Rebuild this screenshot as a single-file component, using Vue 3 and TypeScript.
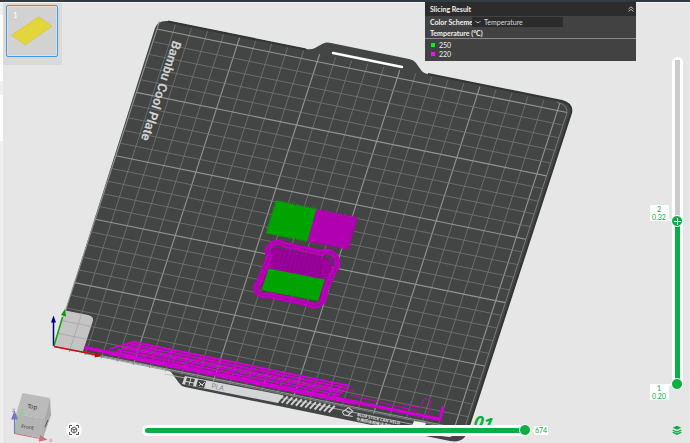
<script setup lang="ts">
import { computed, ref } from 'vue'

interface Line {
  x1: number
  y1: number
  x2: number
  y2: number
  major: boolean
}

const BED = 256
const steps = Array.from({ length: 26 }, (_, i) => i * 10)

const gridLines: Line[] = [
  ...steps.map((v) => ({ x1: v, y1: v === 0 ? 0 : -2, x2: v, y2: BED, major: v % 50 === 0 })),
  ...steps.map((v) => ({ x1: 0, y1: v, x2: BED, y2: v, major: v % 50 === 0 })),
]

const wipeLines = Array.from({ length: 7 }, (_, i) => ({
  x1: 46 - i * 2,
  y1: 15 - i * 2.1,
  x2: 181 - i + (i > 4 ? 12 : 0),
  y2: 15 - i * 2.1,
}))
const wipeTies = Array.from({ length: 23 }, (_, i) => 46 + i * 5.9)
const stripes = Array.from({ length: 12 }, (_, i) => i * 4.7)

const scheme = ref('Temperature')
const schemes = ['Temperature', 'Line Type', 'Speed', 'Layer Height']
const legend = [
  { label: '250', tone: 'hot' },
  { label: '220', tone: 'cool' },
]

const collapsed = ref(false)
const upper = ref(509)
const lower = ref(0)
const move = ref(674)

const offsetOf = (v: number) => `calc(6px + (100% - 12px) * ${v / 1000})`
const upperAt = computed(() => offsetOf(upper.value))
const lowerAt = computed(() => offsetOf(lower.value))
const fillSize = computed(() => `calc((100% - 12px) * ${(upper.value - lower.value) / 1000})`)
const moveSize = computed(() => `calc((100% - 12px) * ${move.value / 674})`)
</script>

<template>
  <main class="viewer">
    <svg class="scene" viewBox="0 0 690 443" preserveAspectRatio="xMinYMin slice" role="img" aria-label="Build plate preview">
      <!-- plate body -->
      <path
        class="plate"
        d="M54 347 L155 28 Q158 20 168 21 L306 49 Q311 50 315 48 L323 43.500 Q327 42 331 43 L409 59 Q414 60 416 63 L421 70 Q423 73 428 74 L562 101 Q573 104 571 113 L466 435 Q462 443 450 441 L185 387 Q181 386 179 383 L171 372 Q169 370 165 369 Z"
      />
      <path class="rim" d="M168 21.500 L306 49.500 M428 74 L562 101 Q573 104 571 113 L466 435" />
      <line class="slot" x1="333" y1="53" x2="402" y2="67" />

      <!-- bed surface, in millimetres -->
      <g transform="matrix(1.602 .326 .412 -1.268 54 346)">
        <line
          v-for="(l, i) in gridLines"
          :key="i"
          :x1="l.x1"
          :y1="l.y1"
          :x2="l.x2"
          :y2="l.y2"
          :class="l.major ? 'major' : 'minor'"
        />
        <path class="corner" d="M0 0 V28 H14 Q18 28 18 24 V0 Z" />
        <path class="corner-grid" d="M10 0 V28 M0 10 H18 M0 20 H18" />
        <path class="rim-light" d="M19 -1 H256 V248 Q256 256 248 256" />
        <path class="edge-light" d="M70 -4 H250" />
      </g>

      <text class="plate-name" transform="translate(173 40) rotate(108)">Bambu Cool Plate</text>

      <!-- lower flange markings -->
      <path class="flange" d="M185 376 L282 395 L278 403 L182 384 Z" />
      <path
        v-for="s in stripes"
        :key="s"
        class="stripe"
        :d="`M${277 + s} ${402 + s * 0.2} L${283 + s} ${395.5 + s * 0.2}`"
      />
      <g class="flange-ink">
        <path d="M187 377.500 l8 1.600 l-2 7 l-8 -1.600 Z M198 379.500 l8 1.600 l-2 7 l-8 -1.600 Z" />
        <path class="ink-cut" d="M191 378 l-2 7 M186 381.500 l8 1.600 M199 382 l3 3 l3 -3 M199 386 l2 -2 l2 2" />
      </g>
      <text class="flange-pla" transform="translate(211 388) rotate(11.5)">PLA</text>
      <g class="eraser" transform="translate(347.500 412) rotate(11)">
        <path d="M-5 1 L0 -4.500 L5 -2 L1 3.500 L-3 3.500 Z M-2.500 -1.500 L2.500 1 M-3 3.500 H6" />
      </g>
      <text class="flange-note" transform="translate(357 416) rotate(11.5)">BLUE STICK CAN HELD</text>
      <text class="flange-note cjk" transform="translate(356 420.500) rotate(11.5)">专用固体胶棒请涂抹均匀</text>
      <path class="tag" d="M414 421 L426 423 L425 426 L412 426 Z M423 434 L450 434 L452 436 L450 437 Z" />
      <text class="plate-number" transform="translate(473 427) rotate(11.5)">01</text>

      <!-- purge line and wipe moves -->
      <g transform="matrix(1.602 .326 .412 -1.268 54 346)">
        <line v-for="(w, i) in wipeLines" :key="i" class="wipe" v-bind="w" />
        <path v-for="x in wipeTies" :key="x" class="tie" :d="`M${x} 15 L${x - 4} 1`" />
        <path class="wipe" d="M33 6 L47 16" />
      </g>
      <path class="purge" d="M84.500 347.500 L441 419.500" />
      <path class="purge side" d="M440 420 L443 406.500" />
      <path class="travel" d="M348 390 L354 391 M350 395 L417 411 M403 409 L404 404.500 L420.500 408 L424 398.500 L431 400 L428 414" />

      <!-- printed parts -->
      <path class="hot-part" d="M276.500 201 L316.500 209.500 L307.500 241 L266.500 233 Z" />
      <path class="cool-part" d="M316.500 209.500 L357 218 L348 249 L307.500 241 Z" />
      <path class="teeth hot-teeth" d="M316.500 209 L276 200.500 L266 233 L307.500 241.500" />
      <path class="teeth cool-teeth" d="M316.500 209 L357.500 217.500 L348.500 249.500 L307.500 241.500" />

      <path class="infill" d="M273 247 L334 259 L323 302 L260 289 Z" />
      <path class="infill-lines" d="M281 245 l-6 22 M285 246 l-6 22 M289 247 l-6 22 M293 248 l-6 22 M297 249 l-6 22 M301 250 l-6 22 M305 250 l-6 23 M309 251 l-6 23 M313 252 l-6 23 M317 253 l-6 23 M321 254 l-6 23 M325 255 l-6 23" />
      <path
        class="brim"
        d="M269 257 C264 245 276 239 285 245 L321 253 C333 247 342 262 335 269 L325 291 C326 304 315 309 306 303 L268 295 C259 298 252 289 259 282 L269 257 Z"
      />
      <path class="brim-lines" d="M269 257 C264 245 276 239 285 245 L321 253 C333 247 342 262 335 269 L325 291 C326 304 315 309 306 303 L268 295 C259 298 252 289 259 282 L269 257 Z" />
      <path class="nook" d="M273 248 Q276 245 282 248 M325 256 Q331 256 331 263 M262 289 L264 283 M315 303 L320 299" />
      <path class="hot-part" d="M268.500 268.500 L325 279.500 L318 301 L261.500 290 Z" />

      <!-- bed axes -->
      <g class="axes">
        <path class="z" d="M53.500 346 V322" />
        <path class="z head" d="M53.500 315.500 l2.500 7 h-5 Z" />
        <path class="y" d="M54 346 L62.500 317" />
        <path class="y head" d="M65 309 l1 7.500 l-5 -1.500 Z" />
        <path class="x" d="M54 346.500 L95 354.500" />
        <path class="x head" d="M102 356 l-7.500 1.500 l1 -5 Z" />
      </g>

      <!-- orientation cube -->
      <g class="cube">
        <path class="cube-side" d="M50 398 L51 415 L43 438 L42 417 Z" />
        <path class="cube-top" d="M22.500 393 L50 398 L45 419 L16 414 Z" />
        <path class="cube-front" d="M16 414 L45 419 L43 438 L14.500 433.500 Z" />
        <path class="cube-rule" d="M45 427 l3 -7" />
        <text class="cube-label" transform="translate(27 408) rotate(8)">Top</text>
        <text class="cube-label small" transform="translate(21 428) rotate(8)">Front</text>
        <path class="gizmo-y" d="M14.500 433.500 L21 413" />
        <path class="gizmo-y fill" d="M22.500 408 l1 7 l-4.500 -1.500 Z" />
        <path class="gizmo-z" d="M14.500 433.500 V418" />
        <path class="gizmo-z fill" d="M14.500 412 l2.500 7 h-5 Z" />
        <path class="gizmo-x" d="M14.500 433.500 L40 438.500" />
        <path class="gizmo-x fill" d="M46 439.500 l-6.500 1.500 l1 -5 Z" />
        <text class="axis-name z-name" x="12" y="412">z</text>
        <text class="axis-name x-name" x="49" y="442">x</text>
      </g>
    </svg>

    <div class="hud">
      <div class="topbar"></div>
      <div class="main">
        <aside class="edge">
          <span class="edge-tab"></span>
          <span class="edge-tab"></span>
        </aside>

        <div class="stage">
          <div class="stage-top">
            <div class="plates">
              <button class="plate-thumb" type="button" aria-label="Plate 1">
                <svg viewBox="0 0 46 47" aria-hidden="true">
                  <path d="M4 27 L29 10 L41.500 18.500 L17 36 Z" />
                </svg>
                <span>1</span>
              </button>
            </div>

            <section class="panel">
              <header>
                <h2>Slicing Result</h2>
                <button type="button" aria-label="Collapse" @click="collapsed = !collapsed">
                  <svg viewBox="0 0 6 6" aria-hidden="true"><path d="M.5 3 L3 .8 L5.500 3 M.5 5.500 L3 3.300 L5.500 5.500" /></svg>
                </button>
              </header>
              <div v-if="!collapsed" class="panel-body">
                <div class="field">
                  <label for="scheme">Color Scheme</label>
                  <span class="select">
                    <svg viewBox="0 0 6 4" aria-hidden="true"><path d="M.5 1 L2 2.500 H4 L5.500 1" /></svg>
                    <select id="scheme" v-model="scheme">
                      <option v-for="s in schemes" :key="s">{{ s }}</option>
                    </select>
                  </span>
                </div>
                <h3>Temperature (°C)</h3>
                <ul>
                  <li v-for="row in legend" :key="row.label"><i :class="row.tone"></i>{{ row.label }}</li>
                </ul>
              </div>
            </section>
          </div>

          <div class="stage-bottom">
            <button class="fit" type="button" aria-label="Fit view">
              <svg viewBox="0 0 16 16" aria-hidden="true">
                <path d="M3.500 6 V3.500 H6 M10 3.500 H12.500 V6 M12.500 10 V12.500 H10 M6 12.500 H3.500 V10" />
                <path d="M8 5 L10.600 6.500 V9.500 L8 11 L5.400 9.500 V6.500 Z M5.400 6.500 L8 8 L10.600 6.500 M8 8 V11" />
              </svg>
            </button>
            <div class="hslider">
              <span class="fill" :style="{ width: moveSize }"></span>
              <input v-model.number="move" type="range" min="0" max="674" aria-label="Move" />
            </div>
            <output class="tip">{{ move }}</output>
          </div>
        </div>

        <aside class="rail">
          <div class="vslider">
            <span class="fill" :style="{ height: fillSize, bottom: lowerAt }"></span>
            <input v-model.number="lower" type="range" min="0" max="1000" aria-label="Lower layer" />
            <input v-model.number="upper" type="range" min="0" max="1000" aria-label="Upper layer" />
            <span class="plus" :style="{ bottom: upperAt }"></span>
            <output class="layer above" :style="{ bottom: upperAt }"><span>2</span><span>0.32</span></output>
            <output class="layer below" :style="{ bottom: lowerAt }"><span>1</span><span>0.20</span></output>
          </div>
          <button class="layers" type="button" aria-label="Layers">
            <svg viewBox="0 0 10 10" aria-hidden="true">
              <path class="solid" d="M5 .8 L9.300 2.800 L5 4.800 L.7 2.800 Z" />
              <path d="M.7 5 L5 7 L9.300 5 M.7 7.200 L5 9.200 L9.300 7.200" />
            </svg>
          </button>
        </aside>
      </div>
    </div>
  </main>
</template>

<style>
body {
  margin: 0;
  overflow: hidden;
}
</style>

<style scoped>
.viewer {
  position: relative;
  height: 100vh;
  background: #e6e6e6;
  font-family: Lato, "Noto Sans CJK SC", sans-serif;
  overflow: hidden;
}
.scene {
  position: absolute;
  inset: 0;
  width: 100%;
  height: 100%;
}
.plate { fill: #434544; }
.rim { fill: none; stroke: #333534; stroke-width: 2; }
.slot { stroke: #fff; stroke-width: 2.5; stroke-linecap: round; }
.minor, .major, .rim-light, .edge-light, .corner-grid { fill: none; vector-effect: non-scaling-stroke; }
.minor { stroke: #747675; stroke-width: 0.8; }
.major { stroke: #939594; stroke-width: 1.1; }
.rim-light { stroke: #858786; stroke-width: 0.8; }
.edge-light { stroke: #b9bbba; stroke-width: 0.8; }
.corner { fill: #c4c4c4; }
.corner-grid { stroke: #a4a4a4; stroke-width: 0.8; }
.plate-name { fill: #d0d1d1; font: 700 13px Roboto, sans-serif; }
.flange { fill: #d3d5d6; }
.stripe { stroke: #d3d5d6; stroke-width: 2; }
.flange-ink { fill: #444; }
.ink-cut { fill: none; stroke: #d3d5d6; stroke-width: 1; }
.flange-pla { fill: #8d8f8f; font: 7px Roboto, sans-serif; }
.eraser { fill: none; stroke: #d8d8d8; stroke-width: 1; }
.flange-note { fill: #e0e0e0; font: 700 4px "Open Sans", sans-serif; }
.cjk { font-family: "Noto Sans CJK SC", sans-serif; }
.tag { fill: #f2f2f2; }
.plate-number { fill: #0aae42; font: italic 700 17px "Open Sans", sans-serif; }
.wipe, .tie { stroke: #cf00cf; vector-effect: non-scaling-stroke; fill: none; }
.wipe { stroke-width: 1.9; }
.tie { stroke-width: 1; }
.purge { stroke: #cc00cc; stroke-width: 3.6; fill: none; }
.side { stroke-width: 3; }
.travel { stroke: #c400c4; stroke-width: 1; fill: none; }
.hot-part { fill: #00a300; }
.cool-part { fill: #b000b0; }
.teeth { fill: none; stroke-width: 1.5; stroke-dasharray: 1 1; }
.hot-teeth { stroke: #00a300; }
.cool-teeth { stroke: #b000b0; }
.infill { fill: #9c009c; }
.infill-lines { fill: none; stroke: #7f0b80; stroke-width: 0.8; }
.brim { fill: none; stroke: #b800b8; stroke-width: 6; stroke-linejoin: round; }
.brim-lines { fill: none; stroke: #a000a0; stroke-width: 1; }
.nook { fill: none; stroke: #4e404e; stroke-width: 1.5; }
.axes path { fill: none; stroke-width: 1.5; }
.axes .z { stroke: #00007c; }
.axes .y { stroke: #0aa70a; }
.axes .x { stroke: #cf1010; }
.axes .head { stroke: none; }
.axes .z.head { fill: #00007c; }
.axes .y.head { fill: #0a960a; }
.axes .x.head { fill: #b00c0c; }
.cube-top { fill: #bbb; }
.cube-front { fill: #b4b4b4; }
.cube-side { fill: #a9a9a9; }
.cube-rule { stroke: #555; stroke-width: 1; }
.cube-label { fill: #3c3c3c; font: 6px "DejaVu Sans", sans-serif; }
.small { font-size: 5px; }
.gizmo-x, .gizmo-y, .gizmo-z { fill: none; stroke-width: 1.2; }
.gizmo-x { stroke: #c87575; }
.gizmo-y { stroke: #9cc79c; }
.gizmo-z { stroke: #7676c4; }
.gizmo-x.fill { fill: #c87575; }
.gizmo-y.fill { fill: #9cc79c; }
.gizmo-z.fill { fill: #7676c4; }
.axis-name { font: 6px "DejaVu Sans", sans-serif; }
.z-name { fill: #8080c8; }
.x-name { fill: #cc8080; }

button {
  padding: 0;
  border: 0;
  background: none;
  font: inherit;
  cursor: pointer;
}
.hud {
  position: relative;
  display: flex;
  flex-direction: column;
  height: 100%;
}
.topbar {
  height: 2px;
  background: #303d40;
}
.main {
  flex: 1;
  display: flex;
  min-height: 0;
}
.edge {
  width: 3px;
  display: flex;
  flex-direction: column;
  gap: 14px;
  padding-top: 13px;
  box-sizing: border-box;
  background: #efefef;
}
.edge-tab {
  height: 66px;
  background: #fff;
}
.edge-tab + .edge-tab { height: 46px; }
.stage {
  flex: 1;
  display: flex;
  flex-direction: column;
  justify-content: space-between;
  border-top: 1px solid #f8f8f8;
}
.stage-top {
  display: flex;
  justify-content: space-between;
  align-items: flex-start;
}
.plates {
  padding: 2px 4px 8px 3px;
  background: #dadada;
  border-radius: 0 0 2px 0;
}
.plate-thumb {
  position: relative;
  display: block;
  width: 52px;
  height: 52px;
  box-sizing: border-box;
  border: 1px solid #3e9ae8;
  border-radius: 2px;
  background: #d2d2d2;
  box-shadow: inset 0 0 0 1px #eadfd8;
}
.plate-thumb svg {
  display: block;
  width: 100%;
}
.plate-thumb path { fill: #e3d63c; stroke: #cfc23a; stroke-width: 0.5; }
.plate-thumb span {
  position: absolute;
  top: 5px;
  left: 6px;
  color: #fff;
  font-size: 8px;
  line-height: 8px;
}
.panel {
  width: 211px;
  margin-top: -1px;
  background: #424242;
  color: #f0f0f0;
  font-size: 7px;
}
.panel header {
  display: flex;
  align-items: center;
  justify-content: space-between;
  height: 14px;
  padding: 0 2px 0 5px;
  background: #2c2c2c;
}
h2, h3 {
  margin: 0;
  font-size: 7px;
  line-height: 10px;
  font-weight: 700;
}
.panel header svg {
  display: block;
  width: 6px;
  height: 6px;
}
.panel path, .fit path { fill: none; stroke: #ddd; stroke-width: 0.8; }
.panel-body { padding-bottom: 3px; }
.field {
  display: flex;
  align-items: center;
  height: 12px;
  padding-left: 5px;
}
.field label {
  width: 42px;
  font-weight: 700;
  line-height: 10px;
  white-space: nowrap;
}
.select {
  position: relative;
  width: 91px;
  height: 10px;
  background: #2b2b2b;
  border-radius: 1px;
}
.select svg {
  position: absolute;
  top: 3px;
  left: 3px;
  width: 6px;
  height: 4px;
}
select {
  display: block;
  width: 100%;
  height: 10px;
  padding: 0 0 0 12px;
  border: 0;
  background: none;
  appearance: none;
  color: #d8d8d8;
  font: 7px Lato, sans-serif;
  line-height: 10px;
}
h3 {
  padding: 0 5px;
  border-bottom: 1px solid #8a8a8a;
}
ul {
  margin: 0;
  padding: 1px 6px 0;
  list-style: none;
}
li {
  display: flex;
  align-items: center;
  gap: 4px;
  height: 9px;
}
li i {
  width: 4px;
  height: 4px;
}
.hot { background: #0df00d; }
.cool { background: #f80df8; }

.stage-bottom {
  display: flex;
  align-items: center;
  padding: 0 88px 5px 63px;
}
.fit {
  width: 16px;
  height: 16px;
  border-radius: 50%;
  background: #fafafa;
}
.fit svg { display: block; }
.fit path { stroke: #555; stroke-width: 1; }
.hslider {
  position: relative;
  flex: 1;
  height: 11px;
  margin-left: 60px;
  border-radius: 6px;
  background: #fff;
}
.hslider .fill {
  position: absolute;
  top: 3px;
  left: 3px;
  height: 5px;
  border-radius: 3px;
  background: #0aae42;
}
.hslider input {
  position: relative;
  display: block;
  width: 100%;
  height: 11px;
}
input {
  margin: 0;
  appearance: none;
  background: none;
}
input::-webkit-slider-thumb {
  appearance: none;
  width: 12px;
  height: 12px;
  box-sizing: border-box;
  border: 1px solid #fff;
  border-radius: 50%;
  background: #0aae42;
  pointer-events: auto;
}
.tip, .layer {
  background: #fff;
  border-radius: 1px;
  color: #0aae42;
  font-size: 7px;
  text-align: center;
}
.tip {
  width: 14px;
  margin-left: 3px;
  line-height: 9px;
}
.rail {
  width: 54px;
  display: flex;
  flex-direction: column;
  align-items: center;
  box-sizing: border-box;
  padding: 54px 0 8px 28px;
  border-top: 1px solid #f8f8f8;
}
.vslider {
  position: relative;
  flex: 1;
  width: 11px;
  border-radius: 6px;
  background: linear-gradient(90deg, transparent 3px, #cbcbcb 3px 8px, transparent 8px) 0 3px / 11px 100% no-repeat, #fff;
}
.vslider .fill {
  position: absolute;
  left: 3px;
  width: 5px;
  background: #0aae42;
}
.vslider input {
  position: absolute;
  inset: 0;
  width: 11px;
  height: 100%;
  writing-mode: vertical-lr;
  direction: rtl;
  pointer-events: none;
}
.plus {
  position: absolute;
  left: 2px;
  width: 7px;
  height: 7px;
  margin-bottom: -4px;
  background:
    linear-gradient(#fff, #fff) 50% 50% / 7px 1px no-repeat,
    linear-gradient(#fff, #fff) 50% 50% / 1px 7px no-repeat;
  pointer-events: none;
}
.layer {
  position: absolute;
  right: 14px;
  width: 19px;
}
.layer span {
  display: block;
  line-height: 8px;
}
.layer::after, .tip::before {
  content: "";
  position: absolute;
  border: 0 solid transparent;
}
.above::after {
  right: -3px;
  bottom: 0;
  border-width: 3px 0 0 3px;
  border-left-color: #fff;
}
.below { transform: translateY(100%); }
.below::after {
  right: -3px;
  top: 0;
  border-width: 0 0 3px 3px;
  border-left-color: #fff;
}
.tip { position: relative; }
.tip::before {
  left: -2px;
  top: 3px;
  border-width: 2px 2px 2px 0;
  border-right-color: #fff;
}
.layers {
  width: 10px;
  height: 10px;
  margin-top: 35px;
}
.layers svg { display: block; }
.layers path { fill: none; stroke: #0aae42; stroke-width: 1.3; }
.layers .solid { fill: #0aae42; stroke: none; }
</style>
